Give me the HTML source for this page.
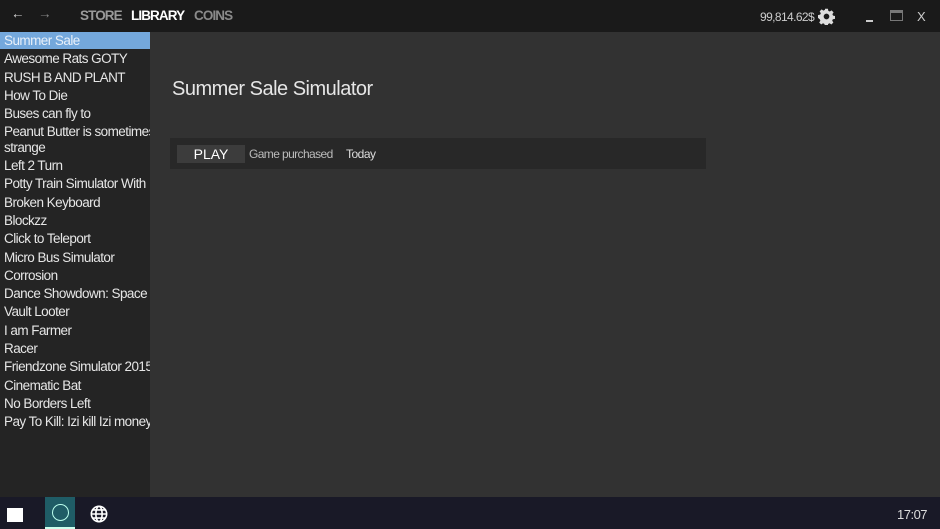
<!DOCTYPE html>
<html><head><style>
body{margin:0;width:940px;height:529px;overflow:hidden;background:#323232;font-family:"Liberation Sans",sans-serif;position:relative}
.top{position:absolute;left:0;top:0;width:940px;height:32px;background:#1a1a1a}
.top span{position:absolute;top:8px;font-size:13.5px;font-weight:bold;letter-spacing:-0.9px}
.side{position:absolute;left:0;top:32px;width:150px;height:465px;background:#242424}
.side div{color:#e6e6e6;font-size:13.5px;letter-spacing:-0.55px;line-height:18.3px;padding-left:4px;white-space:nowrap;overflow:hidden}
.side .sel{background:#74a8dc;color:#e8f0fa;height:17px;line-height:17px;margin-bottom:1.3px}
.task{position:absolute;left:0;top:497px;width:940px;height:32px;background:#191927}
</style></head><body>
<div class="top">
<span style="left:11px;color:#ddd;font-weight:normal;top:6px">&#8592;</span>
<span style="left:38px;color:#888;font-weight:normal;top:6px">&#8594;</span>
<span style="left:80px;color:#9a9a9a">STORE</span>
<span style="left:131px;color:#fff">LIBRARY</span>
<span style="left:194px;color:#8a8a8a">COINS</span>
<span style="left:760px;color:#ccc;font-weight:normal;font-size:12px;top:10px;letter-spacing:-0.6px">99,814.62$</span>
<svg style="position:absolute;left:818px;top:8px" width="17" height="17" viewBox="0 0 24 24"><path fill="#ddd" d="M12 8a4 4 0 1 0 0 8a4 4 0 1 0 0-8zM10 1h4l.6 3 2 1 2.6-1.7 2.8 2.8L20.3 8.7l1 2 2.7.6v4l-3 .6-1 2 1.7 2.6-2.8 2.8-2.6-1.7-2 1-.6 3h-4l-.6-3-2-1-2.6 1.7-2.8-2.8 1.7-2.6-1-2L0 14v-4l3-.6 1-2L2.3 4.8 5.1 2l2.6 1.7 2-1z" fill-rule="evenodd"/><circle cx="12" cy="12" r="3" fill="#1a1a1a"/></svg>
<div style="position:absolute;left:866px;top:20px;width:7px;height:1.5px;background:#ccc"></div>
<div style="position:absolute;left:890px;top:10px;width:13px;height:11px;border:1.5px solid #777;border-top-width:3px;box-sizing:border-box"></div>
<span style="left:917px;color:#ccc;font-weight:normal;font-size:13px;top:9px;letter-spacing:0">X</span>
</div>
<div class="side">
<div class="sel">Summer Sale</div>
<div>Awesome Rats GOTY</div>
<div>RUSH B AND PLANT</div>
<div>How To Die</div>
<div>Buses can fly to</div>
<div>Peanut Butter is sometimes</div>
<div style="margin-top:-3px">strange</div>
<div>Left 2 Turn</div>
<div>Potty Train Simulator With</div>
<div>Broken Keyboard</div>
<div>Blockzz</div>
<div>Click to Teleport</div>
<div>Micro Bus Simulator</div>
<div>Corrosion</div>
<div>Dance Showdown: Space Edition</div>
<div>Vault Looter</div>
<div>I am Farmer</div>
<div>Racer</div>
<div>Friendzone Simulator 2015</div>
<div>Cinematic Bat</div>
<div>No Borders Left</div>
<div>Pay To Kill: Izi kill Izi money</div>
</div>
<div style="position:absolute;left:172px;top:78px;color:#e6e6e6;font-size:20px;letter-spacing:-0.5px">Summer Sale Simulator</div>
<div style="position:absolute;left:170px;top:138px;width:536px;height:31px;background:#282828"></div>
<div style="position:absolute;left:177px;top:145px;width:68px;height:18px;background:#3c3c3c;color:#fff;font-size:14px;text-align:center;line-height:18px">PLAY</div>
<div style="position:absolute;left:249px;top:147px;color:#bbb;font-size:12px;letter-spacing:-0.6px">Game purchased</div>
<div style="position:absolute;left:346px;top:147px;color:#ddd;font-size:12px;letter-spacing:-0.5px">Today</div>
<div class="task">
<div style="position:absolute;left:7px;top:11px;width:16px;height:14px;background:#fff"></div>
<div style="position:absolute;left:45px;top:0;width:30px;height:32px;background:#1f5c66;border-bottom:2px solid #cfe;box-sizing:border-box"></div>
<div style="position:absolute;left:52px;top:7px;width:15px;height:15px;border:1.5px solid #bfe;border-radius:50%"></div>
<svg style="position:absolute;left:90px;top:8px" width="18" height="18" viewBox="0 0 20 20" fill="none" stroke="#fff" stroke-width="1.8"><circle cx="10" cy="10" r="8.5"/><ellipse cx="10" cy="10" rx="3.5" ry="8.5"/><path d="M1.5 10h17M3 5.5h14M3 14.5h14"/></svg>
<div style="position:absolute;left:897px;top:10px;color:#ddd;font-size:13px;letter-spacing:-0.5px">17:07</div>
</div>
</body></html>
